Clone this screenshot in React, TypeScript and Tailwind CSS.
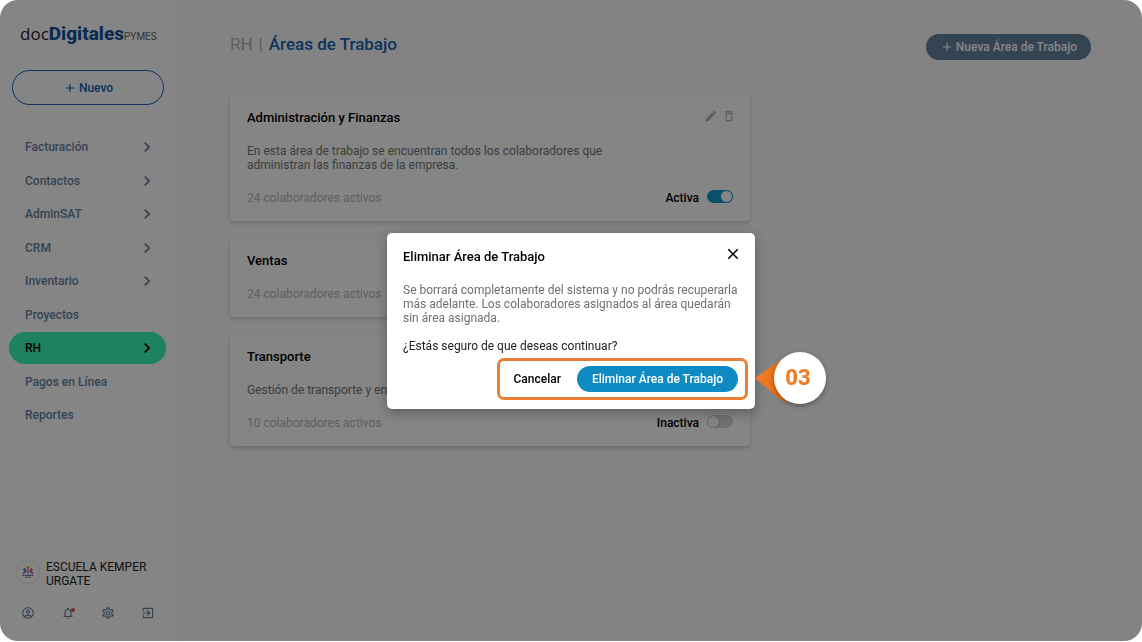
import { useState } from "react";
import {
  MdAdd,
  MdChevronRight,
  MdClose,
  MdDeleteOutline,
  MdEdit,
  MdExitToApp,
  MdOutlineAccountCircle,
  MdOutlineNotifications,
  MdOutlineSettings,
} from "react-icons/md";

type Area = {
  name: string;
  description?: string;
  members: string;
  active?: boolean;
};

const navItems = [
  { label: "Facturación", expandable: true },
  { label: "Contactos", expandable: true },
  { label: "AdminSAT", expandable: true },
  { label: "CRM", expandable: true },
  { label: "Inventario", expandable: true },
  { label: "Proyectos", expandable: false },
  { label: "RH", expandable: true, current: true },
  { label: "Pagos en Línea", expandable: false },
  { label: "Reportes", expandable: false },
];

const areas: Area[] = [
  {
    name: "Administración y Finanzas",
    description:
      "En esta área de trabajo se encuentran todos los colaboradores que administran las finanzas de la empresa.",
    members: "24 colaboradores activos",
    active: true,
  },
  { name: "Ventas", members: "24 colaboradores activos" },
  {
    name: "Transporte",
    description: "Gestión de transporte y entregas",
    members: "10 colaboradores activos",
    active: false,
  },
];

function Logo() {
  return (
    <a href="#" className="flex h-6 items-baseline whitespace-nowrap leading-6">
      <span className="font-['Open_Sans',sans-serif] text-[17px] text-[#222]">doc</span>
      <span className="text-[19px] font-extrabold text-[#12549f]">Digitales</span>
      <span className="text-[10px] text-[#666]">PYMES</span>
    </a>
  );
}

function Sidebar() {
  return (
    <aside className="flex w-[177px] shrink-0 flex-col border-r border-[#f3f3f3] bg-white">
      <div className="pt-[22px] pl-5">
        <Logo />
      </div>
      <button className="mx-3 mt-6 flex h-[35px] items-center justify-center gap-0.5 rounded-full border border-[#1464b4] text-[12px] font-medium text-[#1464b4]">
        <MdAdd size={14} />
        Nuevo
      </button>
      <nav className="mt-[26px] pr-2.5 pl-[9px]">
        <ul className="flex h-[300px] flex-col justify-between">
          {navItems.map((item) => (
            <li key={item.label}>
              <a
                href="#"
                className={`flex h-8 items-center justify-between rounded-full pr-[9px] pl-4 text-[12px] font-medium ${
                  item.current ? "bg-[#3cf9b7] text-black" : "text-[#66829f]"
                }`}
              >
                {item.label}
                {item.expandable && <MdChevronRight size={20} />}
              </a>
            </li>
          ))}
        </ul>
      </nav>
      <div className="mt-auto flex items-start gap-1.5 pl-4 text-[12px] leading-[14px] text-[#222]">
        <span className="flex size-6 shrink-0 items-center justify-center rounded-full border border-[#eee] bg-white shadow-xs">
          <svg viewBox="0 0 24 24" className="size-3" aria-hidden="true">
            <circle cx="12" cy="3" r="3" fill="#f59a23" />
            <circle cx="5" cy="7" r="2.4" fill="#3f62d6" />
            <circle cx="19" cy="7" r="2.4" fill="#d6408d" />
            <path d="M12 7v8" stroke="#f36f4a" strokeWidth="3" />
            <path d="M9 9l-7 6" stroke="#3f62d6" strokeWidth="3" />
            <path d="M15 9l7 6" stroke="#8c3fc9" strokeWidth="3" />
            <path d="M1 18.5h22" stroke="#31398f" strokeWidth="2.4" strokeDasharray="3 .6" />
            <path d="M6 22.5h12" stroke="#5a4fae" strokeWidth="2" strokeDasharray="2 .6" />
          </svg>
        </span>
        <span>
          ESCUELA KEMPER
          <br />
          URGATE
        </span>
      </div>
      <div className="mt-[18px] mb-[21px] flex gap-[26px] pl-[21px] text-[#66829f]">
        <button aria-label="Cuenta">
          <MdOutlineAccountCircle size={14} />
        </button>
        <button aria-label="Notificaciones" className="relative">
          <MdOutlineNotifications size={14} />
          <span className="absolute top-0.5 right-0 size-1 rounded-full bg-[#f4473c]" />
        </button>
        <button aria-label="Configuración">
          <MdOutlineSettings size={14} />
        </button>
        <button aria-label="Salir">
          <MdExitToApp size={14} />
        </button>
      </div>
    </aside>
  );
}

function ActiveSwitch({ initial }: { initial: boolean }) {
  const [active, setActive] = useState(initial);
  return (
    <label className="ml-auto flex items-center gap-2 text-[12px] leading-[14px] font-medium text-black">
      {active ? "Activa" : "Inactiva"}
      <input
        type="checkbox"
        role="switch"
        checked={active}
        onChange={() => setActive(!active)}
        className="mb-1 h-[13px] w-[26px] appearance-none rounded-full bg-[#d6d6d6] before:block before:size-[13px] before:rounded-full before:border before:border-[#c4c4c4] before:bg-white checked:bg-[#109bd2] checked:before:ml-[13px] checked:before:border-[#109bd2]"
      />
    </label>
  );
}

function AreaCard({ area }: { area: Area }) {
  return (
    <article className="rounded-sm bg-white px-[17px] py-4 shadow-[0_2px_4px_rgba(0,0,0,0.18)]">
      <div className="flex h-4 items-center justify-between">
        <h2 className="text-[13px] leading-4 font-medium text-black">{area.name}</h2>
        <div className="-mr-[3px] flex gap-1 pb-1 text-[#b0b3c0]">
          <button aria-label={`Editar ${area.name}`}>
            <MdEdit size={14} />
          </button>
          <button aria-label={`Eliminar ${area.name}`}>
            <MdDeleteOutline size={14} />
          </button>
        </div>
      </div>
      {area.description && (
        <p className="mt-[18px] mb-[19px] max-w-[370px] text-[12px] leading-[14px] text-[#757575]">
          {area.description}
        </p>
      )}
      <div className={`flex h-3.5 items-center ${area.description ? "" : "mt-[18px]"}`}>
        <p className="text-[12px] leading-[14px] text-[#b5b8be]">{area.members}</p>
        {area.active !== undefined && <ActiveSwitch initial={area.active} />}
      </div>
    </article>
  );
}

function StepBadge() {
  return (
    <span className="absolute -top-3.5 left-full ml-[17px] flex h-[52px] w-[71px] justify-end">
      <svg viewBox="0 0 71 52" className="absolute inset-0 size-full overflow-visible" aria-hidden="true">
        <defs>
          <linearGradient id="pointer" x1="0" x2="1" y1="0" y2="0">
            <stop offset="0" stopColor="#f08030" />
            <stop offset="1" stopColor="#e86400" />
          </linearGradient>
        </defs>
        <path d="M0 26 L24 9 L36 26 L30 50 C22 46 17 40 0 26Z" fill="url(#pointer)" />
      </svg>
      <span className="relative flex size-[52px] items-center justify-center rounded-full bg-white pr-1 text-[22px] font-extrabold text-[#ee7d2b] shadow-[0_2px_5px_rgba(0,0,0,0.35)]">
        03
      </span>
    </span>
  );
}

function DeleteDialog() {
  return (
    <div
      role="dialog"
      aria-modal="true"
      aria-labelledby="dialog-title"
      className="w-[368px] rounded-[5px] bg-white pt-4 pr-[17px] pb-[17px] pl-4 text-[12px] leading-[14px] shadow-[0_4px_12px_rgba(0,0,0,0.3)]"
    >
      <div className="flex h-4 items-center justify-between">
        <h2 id="dialog-title" className="text-[13px] leading-4 font-medium text-black">
          Eliminar Área de Trabajo
        </h2>
        <button aria-label="Cerrar" className="-mr-1 pb-1.5 text-black">
          <MdClose size={18} />
        </button>
      </div>
      <p className="mt-[18px] text-[#6f6f6f]">
        Se borrará completamente del sistema y no podrás recuperarla más adelante. Los colaboradores
        asignados al área quedarán sin área asignada.
      </p>
      <p className="mt-3.5 text-[#222]">¿Estás seguro de que deseas continuar?</p>
      <div className="mt-[13px] flex justify-end">
        <div className="relative flex gap-4">
          <button className="font-medium text-black">Cancelar</button>
          <button className="h-[26px] rounded-full bg-[#0f8bc3] px-[15px] font-medium text-white">
            Eliminar Área de Trabajo
          </button>
          <span className="pointer-events-none absolute -inset-y-2 -right-2.5 -left-4 rounded-[7px] border-3 border-[#ea8035]" />
          <StepBadge />
        </div>
      </div>
    </div>
  );
}

export default function App() {
  return (
    <div className="flex min-h-screen bg-white pb-px font-[Roboto,sans-serif]">
      <div className="relative flex flex-1 overflow-hidden rounded-[18px] bg-[#fbfbfb]">
        <Sidebar />
        <main className="min-w-0 flex-1 pt-[33px] pr-[51px] pl-[53px]">
          <header className="flex h-[27px] items-center justify-between">
            <h1 className="flex gap-1.5 pb-1.5 text-[17px] leading-5 text-[#b0b3bc]">
              <span>RH</span>
              <span>|</span>
              <span className="font-medium text-[#1464b4]">Áreas de Trabajo</span>
            </h1>
            <button className="flex h-[26px] items-center gap-0.5 rounded-full bg-[#66829f] px-3.5 text-[12px] font-medium text-white">
              <MdAdd size={14} />
              Nueva Área de Trabajo
            </button>
          </header>
          <section className="mt-[34px] flex max-w-[520px] flex-col gap-4">
            {areas.map((area) => (
              <AreaCard key={area.name} area={area} />
            ))}
          </section>
        </main>
        <div className="absolute inset-0 bg-black/48" />
      </div>
      <div className="fixed inset-0 flex items-center justify-center">
        <DeleteDialog />
      </div>
    </div>
  );
}
